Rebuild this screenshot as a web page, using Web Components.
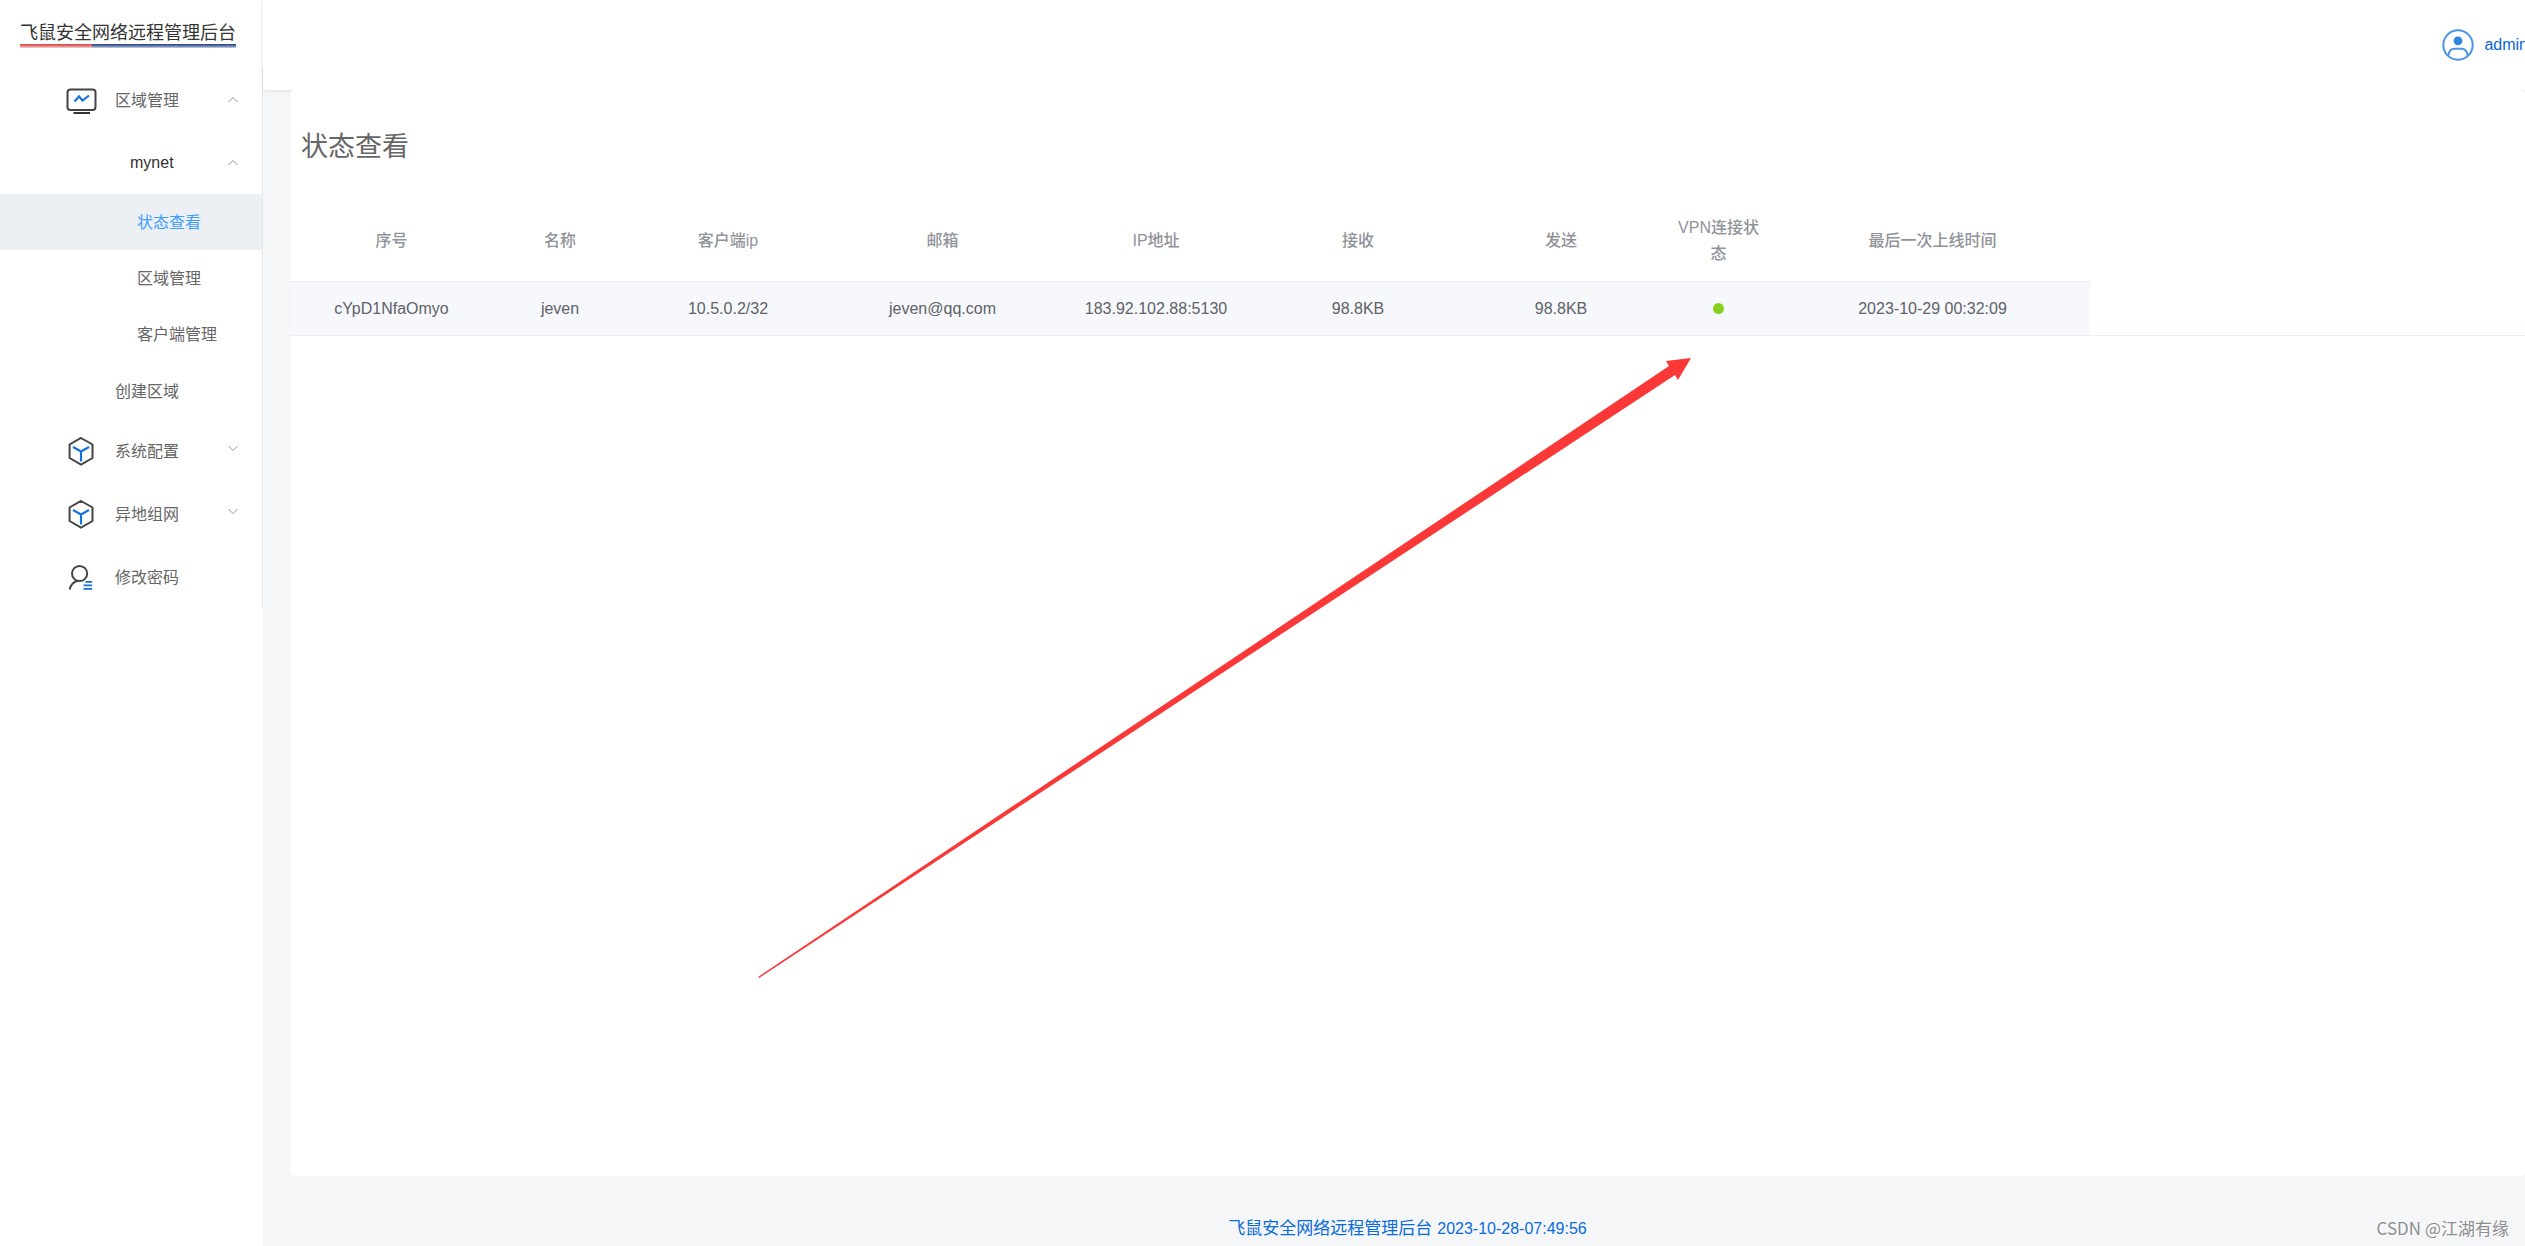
<!DOCTYPE html>
<html lang="zh-CN">
<head>
<meta charset="utf-8">
<title>飞鼠安全网络远程管理后台</title>
<style>
html,body{margin:0;padding:0}
body{font:16px/26px "Liberation Sans","Noto Sans CJK SC",sans-serif;color:#666;background:#f4f6f8;overflow:hidden}
</style>
</head>
<body>
<admin-shell>
  <side-nav slot="side">
    <nav-item icon="monitor" arrow="up">区域管理</nav-item>
    <nav-item level="group" arrow="up">mynet</nav-item>
    <nav-item level="leaf" active>状态查看</nav-item>
    <nav-item level="leaf">区域管理</nav-item>
    <nav-item level="leaf">客户端管理</nav-item>
    <nav-item level="sub">创建区域</nav-item>
    <nav-item icon="cube" arrow="down">系统配置</nav-item>
    <nav-item icon="cube" arrow="down">异地组网</nav-item>
    <nav-item icon="user">修改密码</nav-item>
  </side-nav>
  <top-bar slot="top">admin</top-bar>
  <page-card>
    <span slot="title">状态查看</span>
    <status-table></status-table>
  </page-card>
  <page-footer slot="foot"><span>飞鼠安全网络远程管理后台</span><time slot="time">2023-10-28-07:49:56</time></page-footer>
</admin-shell>
<pointer-arrow></pointer-arrow>
<water-mark>CSDN @江湖有缘</water-mark>
<script>
function define(name, html, setup){
  const t=document.createElement('template');
  t.innerHTML=html;
  customElements.define(name,class extends HTMLElement{
    connectedCallback(){
      if(this.shadowRoot)return;
      this.attachShadow({mode:'open'}).appendChild(t.content.cloneNode(true));
      if(setup)setup(this,this.shadowRoot);
    }
  });
}

const ICONS={
monitor:`<svg viewBox="0 0 32 32" width="32" height="32" fill="none"><rect x="2.5" y="5.5" width="28" height="20.500" rx="3" stroke="#444" stroke-width="2"/><path d="M8.500 29H25" stroke="#333" stroke-width="2"/><path d="M9.500 17.500L14 12.500L17.500 16.500L24 11.500" stroke="#1673dd" stroke-width="2.200"/></svg>`,
cube:`<svg viewBox="0 0 32 32" width="32" height="32" fill="none"><path d="M16 3L27.500 9.500V23L16 29.500L4.600 23V9.500Z" stroke="#444" stroke-width="2"/><path d="M8 12L16 16.500L24 12M16 16.500V26.500" stroke="#1673dd" stroke-width="2.200"/></svg>`,
user:`<svg viewBox="0 0 32 32" width="32" height="32" fill="none"><circle cx="14.600" cy="12.500" r="7.600" stroke="#444" stroke-width="2"/><path d="M13 19.800Q6 21.500 4.800 28.500" stroke="#444" stroke-width="2"/><path d="M20.500 20.800H27.200M18.500 24.300H27.200M18.500 27.900H27.200" stroke="#1673dd" stroke-width="1.800"/></svg>`
};
const ARROWS={
up:`<svg viewBox="0 0 10 10" width="10" height="10" fill="none"><path d="M.5 7L5 2.500L9.500 7" stroke="#909399"/></svg>`,
down:`<svg viewBox="0 0 10 10" width="10" height="10" fill="none"><path d="M.5 0L5 4.500L9.500 0" stroke="#909399"/></svg>`
};

define('nav-item',`<style>
:host{display:block}
a{display:flex;align-items:center;box-sizing:border-box;height:63px;padding:0 24px 0 65px;color:#666;text-decoration:none}
.icon{display:flex;width:32px;margin-right:18px}
.label{flex:1;white-space:nowrap;padding-top:2px}
.arrow{display:flex}
:host([level]) .icon{display:none}
:host([level=group]) .label{padding-top:0}
:host([level=group]) a{padding-left:130px;color:#303133}
:host([level=leaf]) a{padding-left:137px;height:56px}
:host([level=sub]) a{padding-left:115px;height:57px}
:host([active]) a{background:#ecf0f5;color:#409eff}
</style><a href="#"><span class="icon"></span><span class="label"><slot></slot></span><span class="arrow"></span></a>`,
(h,r)=>{
  r.querySelector('.icon').innerHTML=ICONS[h.getAttribute('icon')]||'';
  r.querySelector('.arrow').innerHTML=ARROWS[h.getAttribute('arrow')]||'';
});

define('side-nav',`<style>
:host{display:block}
header{height:68px;box-sizing:border-box;padding:22px 0 0 20px}
a{display:block;width:max-content;font-size:18px;line-height:22px;color:#333;text-decoration:none}
a::after{content:"";display:block;height:4px;background:linear-gradient(rgba(255,255,255,0) 25%,rgba(255,255,255,.75)),linear-gradient(90deg,#d9534f 33.3%,#35528f 33.3%)}
nav{border-right:1px solid #e4e7ec}
</style><header><a href="#">飞鼠安全网络远程管理后台</a></header><nav><slot></slot></nav>`);

define('top-bar',`<style>
:host{display:flex;height:90px;background:#fff;box-shadow:0 0 5px rgba(0,0,0,.12);justify-content:flex-end;overflow:visible}
a{display:flex;align-items:center;gap:10px;color:#0b66d8;text-decoration:none;margin-right:-3px}
</style><a href="#"><svg viewBox="0 0 32 32" width="32" height="32" fill="none"><g stroke="#4a93e6" stroke-width="2"><circle cx="16" cy="16" r="14.700"/><path d="M6.400 26.500C7 21.500 9.500 19.800 12.500 19.800H19.500C22.500 19.800 25 21.500 25.600 26.500"/></g><circle cx="16" cy="11.800" r="4.400" fill="#2f84df"/></svg><slot></slot></a>`);

define('page-card',`<style>
:host{display:block;flex:1;background:#fff;border-radius:5px;padding-top:37px}
h1{margin:0 0 33px;padding-left:11px;font-size:27px;line-height:40px;font-weight:400;color:#666}
</style><h1><slot name="title"></slot></h1><slot></slot>`);

define('status-table',`<style>
:host{display:block;border-bottom:1px solid #ebeef5}
table{width:1800px;table-layout:fixed;border-collapse:separate;border-spacing:0;text-align:center}
th{box-sizing:border-box;height:82px;padding:1px 14px 0;font-weight:500;color:#909399;border-bottom:1px solid #ebeef5}
td{box-sizing:border-box;height:53px;padding:0 14px;color:#606266;background:#f6f8fc}
.dot{display:block;width:11px;height:11px;margin:auto;border-radius:50%;background:#87d01f}
</style><table><colgroup></colgroup><thead><tr></tr></thead><tbody><tr></tr></tbody></table>`,
(h,r)=>{
  const cols=[['序号','cYpD1NfaOmyo',203],['名称','jeven',134],['客户端ip','10.5.0.2/32',202],['邮箱','jeven@qq.com',227],['IP地址','183.92.102.88:5130',200],['接收','98.8KB',204],['发送','98.8KB',202],['VPN连接状态','<span class="dot" role="img" aria-label="online"></span>',113],['最后一次上线时间','2023-10-29 00:32:09',315]];
  r.querySelector('colgroup').innerHTML=cols.map(c=>`<col style="width:${c[2]}px">`).join('');
  r.querySelector('thead tr').innerHTML=cols.map(c=>`<th scope="col">${c[0]}</th>`).join('');
  r.querySelector('tbody tr').innerHTML=cols.map(c=>`<td>${c[1]}</td>`).join('');
});

define('page-footer',`<style>
:host{display:flex;justify-content:center;align-items:center;gap:5px;padding:41px 0 5px;line-height:24px;color:#0b6bd8}
.name{font-size:17px}
</style><span class="name"><slot></slot></span><slot name="time"></slot>`);

define('admin-shell',`<style>
:host{display:flex;min-height:100vh}
aside{flex:0 0 263px;background:#fff}
main{flex:1;min-width:0;display:flex;flex-direction:column}
.body{flex:1;display:flex;flex-direction:column;padding-left:27px}
</style><aside><slot name="side"></slot></aside><main><slot name="top"></slot><div class="body"><slot></slot><slot name="foot"></slot></div></main>`);

define('pointer-arrow',`<style>
:host{position:absolute;left:758px;top:358px;pointer-events:none}
svg{display:block}
</style><svg width="933" height="621" viewBox="0 0 933 621"><path d="M933 0L908 3L911 8L0 619L1 620L917 17L920 22Z" fill="#fb3838"/></svg>`);

define('water-mark',`<style>
:host{position:absolute;right:16px;bottom:5px;font:17px/26px "Noto Sans CJK SC",sans-serif;color:#8c8d90;text-shadow:1px 1px 0 #fff}
</style><slot></slot>`);
</script>
</body>
</html>
